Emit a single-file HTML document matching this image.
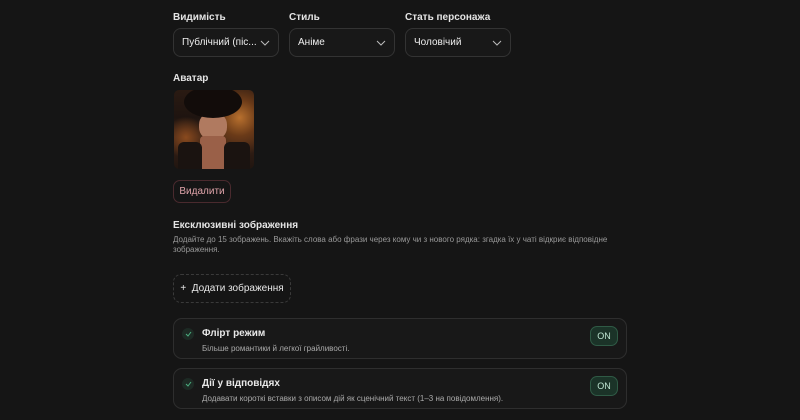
<!DOCTYPE html>
<html><head><meta charset="utf-8"><style>
*{box-sizing:border-box;margin:0;padding:0}
body{width:800px;height:420px;background:#151515;font-family:"Liberation Sans",sans-serif;color:#e8e8e8;position:relative;overflow:hidden}
.a{position:absolute}
.lbl{font-size:10px;font-weight:bold;color:#e4e4e4}
.sel{height:29px;width:106px;border:1px solid #333;border-radius:8px;background:#181818;font-size:10px;padding:0 8px;display:flex;align-items:center;justify-content:space-between;color:#eee}
.sel svg{width:10px;height:6px}
.card{left:173px;width:454px;height:41px;border:1px solid #2e2e2e;border-radius:9px;background:#181818}
.chk{left:8px;top:9px;width:12px;height:12px;border-radius:50%;background:#1d2a24;display:flex;align-items:center;justify-content:center}
.on{right:8px;top:7px;width:28px;height:20px;border-radius:7px;background:#1b3328;border:1px solid #2f5a45;color:#bfe6d2;font-size:9px;display:flex;align-items:center;justify-content:center}
.t{left:28px;top:9px;font-size:10px;font-weight:bold}
.d{left:28px;top:25px;font-size:8px;color:#aaa}
</style></head><body>
<div class="a lbl" style="left:173px;top:12px">Видимість</div>
<div class="a lbl" style="left:289px;top:12px">Стиль</div>
<div class="a lbl" style="left:405px;top:12px">Стать персонажа</div>
<div class="a sel" style="left:173px;top:28px">Публічний (піс... <svg viewBox="0 0 10 6"><path d="M1 1l4 4 4-4" stroke="#bbb" fill="none"/></svg></div>
<div class="a sel" style="left:289px;top:28px">Аніме <svg viewBox="0 0 10 6"><path d="M1 1l4 4 4-4" stroke="#bbb" fill="none"/></svg></div>
<div class="a sel" style="left:405px;top:28px">Чоловічий <svg viewBox="0 0 10 6"><path d="M1 1l4 4 4-4" stroke="#bbb" fill="none"/></svg></div>
<div class="a lbl" style="left:173px;top:73px">Аватар</div>
<div class="a" style="left:174px;top:90px;width:80px;height:79px;border-radius:5px;overflow:hidden;background:radial-gradient(circle at 82% 35%,#b8702e 0,#6a3a18 22%,transparent 45%),radial-gradient(circle at 15% 60%,#8a4a1e 0,transparent 25%),linear-gradient(180deg,#2a1a12 0,#1e1410 35%,#3a2216 60%,#201510 100%)">
<div class="a" style="left:25px;top:22px;width:28px;height:28px;border-radius:45%;background:#b07a60"></div>
<div class="a" style="left:10px;top:-4px;width:58px;height:32px;border-radius:50%;background:#120c0a"></div>
<div class="a" style="left:26px;top:46px;width:26px;height:33px;background:#9a6048;border-radius:4px 4px 0 0"></div>
<div class="a" style="left:4px;top:52px;width:24px;height:27px;background:#1a1310;border-radius:6px 6px 0 0"></div>
<div class="a" style="left:50px;top:52px;width:26px;height:27px;background:#1a1310;border-radius:6px 6px 0 0"></div>
</div>
<div class="a" style="left:173px;top:180px;width:58px;height:23px;border:1px solid #4a2a2e;border-radius:7px;font-size:10px;color:#e0a4aa;display:flex;align-items:center;justify-content:center">Видалити</div>
<div class="a lbl" style="left:173px;top:220px">Ексклюзивні зображення</div>
<div class="a" style="left:173px;top:235px;font-size:8px;color:#999;line-height:10px;width:450px">Додайте до 15 зображень. Вкажіть слова або фрази через кому чи з нового рядка: згадка їх у чаті відкриє відповідне зображення.</div>
<div class="a" style="left:173px;top:274px;width:118px;height:29px;border:1px dashed #3a3a3a;border-radius:8px;font-size:10px;display:flex;align-items:center;justify-content:center">+&nbsp; Додати зображення</div>
<div class="a card" style="top:318px"><div class="a chk"><svg width="7" height="6" viewBox="0 0 7 6"><path d="M1 3l2 2 3-4" stroke="#4caf80" fill="none" stroke-width="1"/></svg></div><div class="a t">Флірт режим</div><div class="a d">Більше романтики й легкої грайливості.</div><div class="a on">ON</div></div>
<div class="a card" style="top:368px"><div class="a chk"><svg width="7" height="6" viewBox="0 0 7 6"><path d="M1 3l2 2 3-4" stroke="#4caf80" fill="none" stroke-width="1"/></svg></div><div class="a t">Дії у відповідях</div><div class="a d">Додавати короткі вставки з описом дій як сценічний текст (1–3 на повідомлення).</div><div class="a on">ON</div></div>
</body></html>
